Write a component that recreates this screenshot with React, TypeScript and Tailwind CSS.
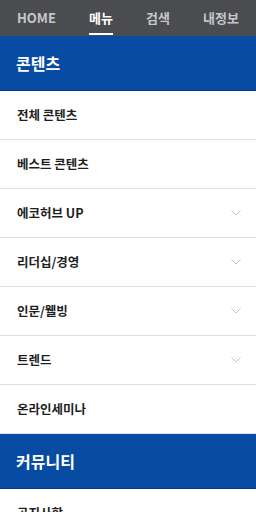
const font = { fontFamily: '"Noto Sans CJK KR", "Noto Sans", sans-serif' };

interface MenuItem {
  label: string;
  sub?: boolean;
}

const contents: MenuItem[] = [
  { label: '전체 콘텐츠' },
  { label: '베스트 콘텐츠' },
  { label: '에코허브 UP', sub: true },
  { label: '리더십/경영', sub: true },
  { label: '인문/웰빙', sub: true },
  { label: '트렌드', sub: true },
  { label: '온라인세미나' },
];

const community: MenuItem[] = [{ label: '공지사항' }, { label: '자유게시판' }];

function Chevron() {
  return (
    <svg width="10" height="6" viewBox="0 0 10 6" fill="none" stroke="#c4c4c8" strokeWidth="1">
      <path d="M0.5 0.5 L5 5 L9.5 0.5" />
    </svg>
  );
}

function Section({ title, items }: { title: string; items: MenuItem[] }) {
  return (
    <div>
      <div className="h-[55px] bg-[#074ca2] border-b border-[#043a86] flex items-center px-[16px]">
        <h2 className="text-white text-[16px] font-bold">{title}</h2>
      </div>
      {items.map((item, i) => (
        <div
          key={i}
          className="h-[49px] flex items-center justify-between pl-[17px] pr-[15px] border-b border-[#dcdce4] bg-white"
        >
          <span className="text-[12.5px] font-bold text-[#1e1e1e]">{item.label}</span>
          {item.sub && <Chevron />}
        </div>
      ))}
    </div>
  );
}

export default function App() {
  const tabs = ['HOME', '메뉴', '검색', '내정보'];
  return (
    <div className="w-[256px] h-[512px] overflow-hidden bg-white" style={font}>
      {/* 상단 탭 */}
      <div className="h-[36px] bg-[#4b4c50] flex justify-between px-[17px]">
        {tabs.map((t) => (
          <div
            key={t}
            className={`relative flex items-center text-[13px] font-bold ${
              t === '메뉴' ? 'text-white' : 'text-[#c6c6c8]'
            }`}
          >
            {t}
            {t === '메뉴' && <span className="absolute left-0 right-0 bottom-[1px] h-[2px] bg-white" />}
          </div>
        ))}
      </div>
      <Section title="콘텐츠" items={contents} />
      <Section title="커뮤니티" items={community} />
    </div>
  );
}
